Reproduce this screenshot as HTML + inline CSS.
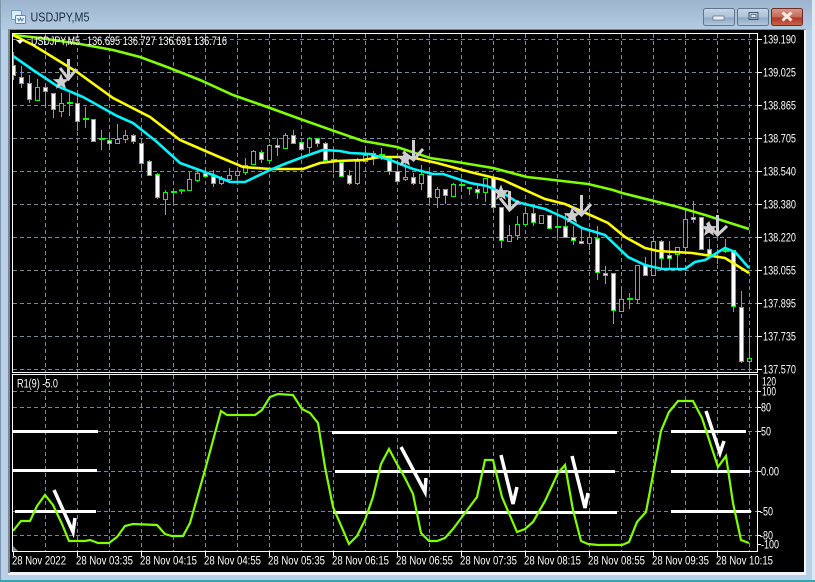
<!DOCTYPE html>
<html><head><meta charset="utf-8"><title>USDJPY,M5</title>
<style>
html,body{margin:0;padding:0;background:#b8d0e6;width:815px;height:582px;overflow:hidden}
svg{display:block;position:absolute;left:0;top:0}
.t{font-family:"Liberation Sans",sans-serif;font-size:11.5px;fill:#fff}
</style></head><body>
<svg width="815" height="582" viewBox="0 0 815 582" xmlns="http://www.w3.org/2000/svg">
<defs>
<linearGradient id="tb" x1="0" y1="0" x2="0" y2="1"><stop offset="0" stop-color="#9cb5ce"/><stop offset="1" stop-color="#b4cce3"/></linearGradient>
<linearGradient id="bb" x1="0" y1="0" x2="0" y2="1"><stop offset="0" stop-color="#c6d6e6"/><stop offset=".5" stop-color="#adc3d9"/><stop offset=".55" stop-color="#8ea9c4"/><stop offset="1" stop-color="#b4cade"/></linearGradient>
<linearGradient id="cb" x1="0" y1="0" x2="0" y2="1"><stop offset="0" stop-color="#d99a8c"/><stop offset=".5" stop-color="#c4675a"/><stop offset=".55" stop-color="#ae3722"/><stop offset="1" stop-color="#c9644e"/></linearGradient>
<clipPath id="m"><rect x="13" y="34" width="744" height="338"/></clipPath>
<clipPath id="s"><rect x="13" y="375" width="744" height="176"/></clipPath>
<polygon id="star" points="0,-8.500 2.200,-2.900 8.100,-2.700 3.500,1.100 5,6.900 0,3.600 -5,6.900 -3.500,1.100 -8.100,-2.700 -2.200,-2.900" fill="#cfcfd2"/>
</defs>

<!-- window frame -->
<rect width="815" height="582" fill="#b9d1e8"/>
<rect width="815" height="30" fill="url(#tb)"/>
<rect x="0" y="0" width="1" height="582" fill="#7f96ad"/>
<rect x="812" y="0" width="3" height="582" fill="#dfe9f1"/>
<rect x="0" y="580" width="815" height="2" fill="#37a4b4"/>
<rect x="8" y="29" width="798" height="546" fill="#f2f4f7"/>
<rect x="8" y="29" width="2" height="544" fill="#7b8791"/>
<rect x="8" y="29" width="798" height="1" fill="#7b8791"/>
<rect x="10" y="30" width="794" height="542" fill="#000"/>

<!-- title icon -->
<rect x="11.500" y="10.500" width="10" height="9" rx="1" fill="#dcebf8" stroke="#6f9cc9"/>
<rect x="15.500" y="15.500" width="10" height="8" rx="1" fill="#eef6fd" stroke="#4f8cc7"/>
<path d="M17.500 18l1.500 3 1.500-3 1.500 3 1.500-3" fill="none" stroke="#3d7fbe"/>
<text x="30.500" y="21.500" font-family="Liberation Sans,sans-serif" font-size="13" fill="#1c2c3e" textLength="59" lengthAdjust="spacingAndGlyphs">USDJPY,M5</text>

<!-- window buttons -->
<rect x="703.500" y="8.500" width="31" height="17" rx="2" fill="url(#bb)" stroke="#61758c"/>
<rect x="713" y="16" width="11" height="4" fill="#e9eef3" stroke="#5a6c80" stroke-width=".7"/>
<rect x="737.500" y="8.500" width="31" height="17" rx="2" fill="url(#bb)" stroke="#61758c"/>
<rect x="749" y="12.500" width="9" height="7" fill="none" stroke="#44566b" stroke-width="1"/>
<rect x="751" y="14.500" width="5" height="3" fill="#dfe7ef" stroke="#44566b" stroke-width=".7"/>
<rect x="771.500" y="8.500" width="31" height="17" rx="2" fill="url(#cb)" stroke="#6e2c24"/>
<path d="M782.500 12.500l9 8M791.500 12.500l-9 8" stroke="#f1e9e6" stroke-width="3" fill="none"/>

<!-- grid -->
<path d="M13 39.500H757M13 72.500H757M13 105.500H757M13 138.500H757M13 171.500H757M13 204.500H757M13 237.500H757M13 270.500H757M13 303.500H757M13 336.500H757M13 369.500H757M13 391.500H757M13 407.500H757M13 431.500H757M13 471.500H757M13 511.500H757M13 535.500H757" stroke="#778899" stroke-dasharray="4 3" fill="none" shape-rendering="crispEdges"/>
<path d="M45.500 34V372M77.500 34V372M109.500 34V372M141.500 34V372M173.500 34V372M205.500 34V372M237.500 34V372M269.500 34V372M301.500 34V372M333.500 34V372M365.500 34V372M397.500 34V372M429.500 34V372M461.500 34V372M493.500 34V372M525.500 34V372M557.500 34V372M589.500 34V372M621.500 34V372M653.500 34V372M685.500 34V372M717.500 34V372M749.500 34V372M45.500 375V551M77.500 375V551M109.500 375V551M141.500 375V551M173.500 375V551M205.500 375V551M237.500 375V551M269.500 375V551M301.500 375V551M333.500 375V551M365.500 375V551M397.500 375V551M429.500 375V551M461.500 375V551M493.500 375V551M525.500 375V551M557.500 375V551M589.500 375V551M621.500 375V551M653.500 375V551M685.500 375V551M717.500 375V551M749.500 375V551" stroke="#778899" stroke-dasharray="4 3" fill="none" shape-rendering="crispEdges"/>

<g clip-path="url(#m)">
<!-- wicks -->
<path fill="none" stroke="#00ff00" shape-rendering="crispEdges" d="M13.500 52V80M21.500 66V88M29.500 75V103M37.500 79V100M45.500 87V108M53.500 93V118M61.500 93V117M69.500 93V116M77.500 94V131M85.500 107V128M93.500 119V141M101.500 130V150M109.500 133V150M117.500 124V143M125.500 130V143M133.500 134V144M141.500 142V169M149.500 160V176M157.500 173V199M165.500 190V215M173.500 190V202M181.500 189V194M189.500 172V191M197.500 168V182M205.500 168V178M213.500 170V187M221.500 176V185M229.500 168V182M237.500 168V183M245.500 158V175M253.500 150V165M261.500 150V163M269.500 144V161M277.500 138V156M285.500 133V149M293.500 130V143M301.500 142V151M309.500 137V153M317.500 138V147M325.500 142V161M333.500 150V173M341.500 162V177M349.500 170V185M357.500 158V185M365.500 146V162M373.500 151V165M381.500 148V160M389.500 157V175M397.500 163V182M405.500 162V181M413.500 173V185M421.500 165V190M429.500 175V203M437.500 187V208M445.500 189V204M453.500 183V197M461.500 183V192M469.500 187V195M477.500 183V199M485.500 178V202M493.500 177V211M501.500 207V248M509.500 225V242M517.500 216V240M525.500 207V225M533.500 207V226M541.500 215V224M549.500 215V229M557.500 215V237M565.500 213V238M573.500 226V245M581.500 228V244M589.500 232V250M597.500 226V280M605.500 266V284M613.500 273V324M621.500 287V311M629.500 293V309M637.500 265V303M645.500 257V276M653.500 236V275M661.500 240V268M669.500 241V270M677.500 247V268M685.500 208V252M693.500 201V223M701.500 217V250M709.500 239V255M717.500 249V264M725.500 239V253M733.500 250V312M741.500 291V363M749.500 328V372"/>
<!-- dojis -->
<path fill="none" stroke="#00ff00" stroke-width="2" shape-rendering="crispEdges" d="M67 103h6M83 119h6M99 139h6M171 192h6M179 190.500h6M331 160h6M379 155h6M555 227h6M459 185h6M627 299h6M723 251h6"/>
<!-- white bodies -->
<path fill="#fff" stroke="#00ff00" shape-rendering="crispEdges" d="M11.500 65.500h4v10h-4zM19.500 77.500h4v6h-4zM27.500 83.500h4v16h-4zM43.500 87.500h4v4h-4zM51.500 93.500h4v16h-4zM75.500 103.500h4v18h-4zM91.500 119.500h4v22h-4zM107.500 140.500h4v3h-4zM131.500 135.500h4v6h-4zM139.500 143.500h4v20h-4zM147.500 161.500h4v14h-4zM155.500 174.500h4v23h-4zM203.500 173.500h4v3h-4zM211.500 176.500h4v7h-4zM259.500 152.500h4v7h-4zM275.500 145.500h4v2h-4zM291.500 135.500h4v8h-4zM299.500 142.500h4v7h-4zM315.500 138.500h4v5h-4zM323.500 143.500h4v17h-4zM339.500 162.500h4v14h-4zM347.500 175.500h4v8h-4zM371.500 153.500h4v4h-4zM387.500 158.500h4v13h-4zM395.500 171.500h4v10h-4zM411.500 177.500h4v6h-4zM427.500 175.500h4v22h-4zM443.500 189.500h4v6h-4zM467.500 187.500h4v1h-4zM475.500 189.500h4v3h-4zM491.500 177.500h4v30h-4zM499.500 207.500h4v33h-4zM531.500 213.500h4v9h-4zM547.500 215.500h4v13h-4zM563.500 226.500h4v11h-4zM571.500 237.500h4v3h-4zM579.500 241.500h4v2h-4zM595.500 238.500h4v34h-4zM603.500 273.500h4v2h-4zM611.500 273.500h4v37h-4zM643.500 265.500h4v10h-4zM659.500 241.500h4v17h-4zM667.500 255.500h4v3h-4zM691.500 217.500h4v2h-4zM699.500 217.500h4v32h-4zM707.500 249.500h4v5h-4zM731.500 250.500h4v56h-4zM739.500 307.500h4v54h-4z"/>
<!-- black bodies -->
<path fill="#000" stroke="#00ff00" shape-rendering="crispEdges" d="M35.500 87.500h4v13h-4zM59.500 103.500h4v8h-4zM115.500 139.500h4v4h-4zM123.500 135.500h4v4h-4zM163.500 192.500h4v7h-4zM187.500 179.500h4v11h-4zM195.500 173.500h4v7h-4zM219.500 179.500h4v4h-4zM227.500 175.500h4v4h-4zM235.500 171.500h4v4h-4zM243.500 165.500h4v7h-4zM251.500 151.500h4v13h-4zM267.500 145.500h4v15h-4zM283.500 135.500h4v13h-4zM307.500 138.500h4v9h-4zM355.500 161.500h4v22h-4zM363.500 155.500h4v6h-4zM403.500 177.500h4v2h-4zM419.500 174.500h4v9h-4zM435.500 189.500h4v8h-4zM451.500 184.500h4v12h-4zM483.500 178.500h4v14h-4zM507.500 235.500h4v6h-4zM515.500 224.500h4v11h-4zM523.500 213.500h4v11h-4zM539.500 215.500h4v8h-4zM587.500 237.500h4v6h-4zM619.500 299.500h4v12h-4zM635.500 265.500h4v34h-4zM651.500 241.500h4v34h-4zM675.500 247.500h4v7h-4zM683.500 219.500h4v28h-4zM747.500 358.500h4v3h-4z"/>
<!-- moving averages -->
<polyline fill="none" stroke="#7fff00" stroke-width="2.600" points="13,35 40,38 80,44 113,50 140,57 167,67 200,80 233,95 270,108 303,120 337,132 363,141 397,147 430,158 457,162 493,168 527,177 545,179 588,184 613,190 622,193 678,207 705,215 749,229"/>
<polyline fill="none" stroke="#ffff00" stroke-width="2.600" points="13,35 33,45 77,72 113,98 150,117 180,140 217,156 243,167 270,169 303,169 320,163 337,161 363,160 380,157 410,157 437,163 470,172 503,180 545,199 565,204 588,214 608,223 625,237 645,248 658,251 692,253 725,258 749,273"/>
<polyline fill="none" stroke="#00f6ff" stroke-width="2.600" points="13,56 33,70 57,86 83,97 117,116 133,123 157,142 180,163 213,175 230,182 245,182 270,170 287,163 303,157 323,150 340,151 350,153 370,154 390,160 413,169 433,174 443,174 470,183 487,186 503,193 517,202 545,209 565,218 582,228 605,235 628,257 645,265 662,269 685,269 695,262 705,260 725,248 735,252 749,268"/>
<!-- stars and arrows -->
<use href="#star" x="61" y="82"/><use href="#star" x="405" y="159"/><use href="#star" x="501" y="193"/><use href="#star" x="572" y="216"/><use href="#star" x="709" y="229"/>
<g fill="none" stroke="#cfcfd2" stroke-width="3">
<path d="M68.500 59V79M60 68l8.500 11 8-10"/>
<path d="M413.500 140V159M403 152l10.500 8 9.500-11"/>
<path d="M509.500 191V210M500 198l9.500 12 9.500-9"/>
<path d="M581.500 195V214M572 207l9.500 8 9.500-11"/>
<path d="M717.500 215V234M707 223l10.500 12 9.500-9"/>
</g>
</g>

<g clip-path="url(#s)">
<path d="M13 551l5 0-5-5z" fill="#778899"/>
<!-- flat white levels -->
<path fill="none" stroke="#fff" stroke-width="3" shape-rendering="crispEdges" d="M13 431.500H98M13 470.500H97M15 511.500H96M332 432.500H617M335 471.500H615M333 512.500H617M671 431.500H746M671 471.500H750M671 511.500H751"/>
<polyline fill="none" stroke="#7fff00" stroke-width="2.200" points="13,531 21,521 30,521 37,506 45,495 53,505 62,524 69,541 85,541 90,540 98,543 109,543 117,537 125,526 133,524 157,525 165,534 172,536 183,536 190,523 205,470 221,411 227,415 255,415 262,410 270,397 278,394 293,395 302,409 310,413 318,423 325,467 333,507 349,544 357,536 365,520 373,497 381,464 389,449 397,464 405,478 413,494 421,533 429,541 437,541 445,538 453,529 462,517 477,497 485,460 493,460 502,497 517,532 525,529 533,522 545,501 558,473 565,465 573,510 581,541 588,544 598,545 622,545 629,542 637,522 646,512 653,475 661,431 669,412 678,401 693,401 702,418 718,467 726,456 733,503 741,540 749,543"/>
<!-- pen arrows -->
<g fill="none" stroke="#fff" stroke-width="3.500">
<polyline points="54,490 73,532 75,518"/>
<polyline points="401,447 425,492 426,478"/>
<polyline points="501,455 513,504 517,487"/>
<polyline points="572,456 585,508 588,493"/>
<polyline points="706,411 720,453 724,441"/>
</g>
</g>

<!-- plot borders -->
<rect x="12.500" y="33.500" width="745" height="339" fill="none" stroke="#fff" shape-rendering="crispEdges"/>
<rect x="12.500" y="374.500" width="745" height="177" fill="none" stroke="#fff" shape-rendering="crispEdges"/>
<!-- ticks -->
<path stroke="#fff" fill="none" shape-rendering="crispEdges" d="M758 39.500h4M758 72.500h4M758 105.500h4M758 138.500h4M758 171.500h4M758 204.500h4M758 237.500h4M758 270.500h4M758 303.500h4M758 336.500h4M758 369.500h4M758 391.500h3M758 407.500h3M758 431.500h3M758 471.500h3M758 511.500h3M758 535.500h3M758 544.500h3M13.500 552v4M77.500 552v4M141.500 552v4M205.500 552v4M269.500 552v4M333.500 552v4M397.500 552v4M461.500 552v4M525.500 552v4M589.500 552v4M653.500 552v4M717.500 552v4"/>

<!-- header text -->
<polygon points="16,40 24,40 20,44" fill="#fff"/>
<text class="t" x="31" y="45" textLength="49" lengthAdjust="spacingAndGlyphs">USDJPY,M5</text>
<text class="t" x="87" y="45" textLength="140" lengthAdjust="spacingAndGlyphs">136.695 136.727 136.691 136.716</text>
<text class="t" x="17" y="387.500" textLength="41" lengthAdjust="spacingAndGlyphs">R1(9) -5.0</text>

<!-- price axis -->
<g class="t">
<text class="t" x="763" y="43.500" textLength="33" lengthAdjust="spacingAndGlyphs">139.190</text>
<text class="t" x="763" y="76.500" textLength="33" lengthAdjust="spacingAndGlyphs">139.025</text>
<text class="t" x="763" y="109.500" textLength="33" lengthAdjust="spacingAndGlyphs">138.865</text>
<text class="t" x="763" y="142.500" textLength="33" lengthAdjust="spacingAndGlyphs">138.705</text>
<text class="t" x="763" y="175.500" textLength="33" lengthAdjust="spacingAndGlyphs">138.540</text>
<text class="t" x="763" y="208.500" textLength="33" lengthAdjust="spacingAndGlyphs">138.380</text>
<text class="t" x="763" y="241.500" textLength="33" lengthAdjust="spacingAndGlyphs">138.220</text>
<text class="t" x="763" y="274.500" textLength="33" lengthAdjust="spacingAndGlyphs">138.055</text>
<text class="t" x="763" y="307.500" textLength="33" lengthAdjust="spacingAndGlyphs">137.895</text>
<text class="t" x="763" y="340.500" textLength="33" lengthAdjust="spacingAndGlyphs">137.735</text>
<text class="t" x="763" y="373.500" textLength="33" lengthAdjust="spacingAndGlyphs">137.570</text>
<text class="t" x="762" y="385.500" textLength="14" lengthAdjust="spacingAndGlyphs">120</text>
<text class="t" x="762" y="395.500" textLength="14" lengthAdjust="spacingAndGlyphs">100</text>
<text class="t" x="761" y="411.500" textLength="10" lengthAdjust="spacingAndGlyphs">80</text>
<text class="t" x="761" y="435.500" textLength="10" lengthAdjust="spacingAndGlyphs">50</text>
<text class="t" x="761" y="475.500" textLength="18" lengthAdjust="spacingAndGlyphs">0.00</text>
<text class="t" x="760" y="515.500" textLength="13" lengthAdjust="spacingAndGlyphs">-50</text>
<text class="t" x="760" y="539.500" textLength="13" lengthAdjust="spacingAndGlyphs">-80</text>
<text class="t" x="761" y="548.500" textLength="18" lengthAdjust="spacingAndGlyphs">-100</text>
</g>

<!-- time axis -->
<text class="t" x="12" y="564.500" textLength="54" lengthAdjust="spacingAndGlyphs">28 Nov 2022</text>
<text class="t" x="76" y="564.500" textLength="57" lengthAdjust="spacingAndGlyphs">28 Nov 03:35</text>
<text class="t" x="140" y="564.500" textLength="57" lengthAdjust="spacingAndGlyphs">28 Nov 04:15</text>
<text class="t" x="204" y="564.500" textLength="57" lengthAdjust="spacingAndGlyphs">28 Nov 04:55</text>
<text class="t" x="268" y="564.500" textLength="57" lengthAdjust="spacingAndGlyphs">28 Nov 05:35</text>
<text class="t" x="332" y="564.500" textLength="57" lengthAdjust="spacingAndGlyphs">28 Nov 06:15</text>
<text class="t" x="396" y="564.500" textLength="57" lengthAdjust="spacingAndGlyphs">28 Nov 06:55</text>
<text class="t" x="460" y="564.500" textLength="57" lengthAdjust="spacingAndGlyphs">28 Nov 07:35</text>
<text class="t" x="524" y="564.500" textLength="57" lengthAdjust="spacingAndGlyphs">28 Nov 08:15</text>
<text class="t" x="588" y="564.500" textLength="57" lengthAdjust="spacingAndGlyphs">28 Nov 08:55</text>
<text class="t" x="652" y="564.500" textLength="57" lengthAdjust="spacingAndGlyphs">28 Nov 09:35</text>
<text class="t" x="716" y="564.500" textLength="57" lengthAdjust="spacingAndGlyphs">28 Nov 10:15</text>
</svg>
</body></html>
